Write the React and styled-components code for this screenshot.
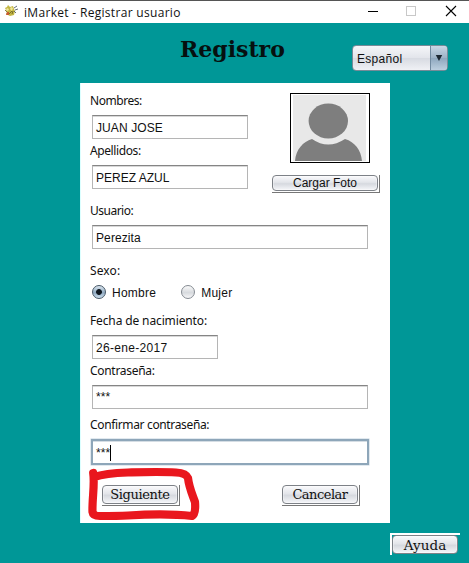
import React from "react";
import styled, { createGlobalStyle, css } from "styled-components";

const Global = createGlobalStyle`
  * { box-sizing: border-box; }
  body { margin: 0; overflow: hidden; background: #009797; }
`;

const Window = styled.main`
  position: relative;
  width: 469px;
  height: 563px;
  display: flex;
  flex-direction: column;
  overflow: hidden;
  background: #009797;
  color: #111;
  font: 12px "Liberation Sans", Arial, sans-serif;
`;

const TitleBar = styled.header`
  height: 23px;
  flex: none;
  display: flex;
  align-items: center;
  padding: 0 12px 2px 4px;
  background: #fff;
  border-top: 1px solid #555;
`;

const WindowTitle = styled.span`
  flex: 1;
  margin-left: 5px;
  padding-top: 3px;
  font: 12px/18px "Open Sans", "Noto Sans", sans-serif;
  letter-spacing: 0.31px;
  white-space: nowrap;
`;

const Heading = styled.div`
  height: 60px;
  flex: none;
  display: flex;
  justify-content: space-between;
  padding: 0 21px 0 180px;
`;

const Title = styled.h1`
  margin: 11px 0 0;
  font: bold 22px/30px "DejaVu Serif", serif;
  letter-spacing: 0;
  color: #061010;
`;

const Combo = styled.div`
  width: 96px;
  height: 26px;
  margin-top: 22px;
  display: flex;
  border: 1px solid #788b98;
  border-radius: 4px;
  overflow: hidden;
  background: linear-gradient(#f5f6f9, #e3e5eb 48%, #d8dbe2 52%, #f0f1f5);
  line-height: 26px;
  padding-left: 4px;
  letter-spacing: 0.3px;
`;

const ComboArrow = styled.span`
  width: 17px;
  margin-left: auto;
  display: grid;
  place-items: center;
  border-left: 1px solid #718aa0;
  background: linear-gradient(#c9d8e6, #9eb3c8 48%, #8fa8bf 52%, #bccfdf);
`;

const Card = styled.form`
  width: 310px;
  height: 440px;
  flex: none;
  margin-left: 80px;
  padding: 10px 20px 0 9px;
  background: #fff;
  border-left: 1px solid #dcffff;
`;

const Top = styled.div`
  display: flex;
  justify-content: space-between;
  height: 110px;
`;

const Names = styled.div`
  width: 160px;
`;

const Label = styled.label`
  display: block;
  height: 22px;
  font: 12px/16px "Noto Sans", sans-serif;
  letter-spacing: ${(p) => p.$spacing ?? -0.25}px;
  white-space: nowrap;
`;

const Field = styled.div`
  width: ${(p) => p.$width}px;
  height: 24px;
  margin: 0 0 ${(p) => p.$gap ?? 0}px 2px;
  padding: 1px 0 ${(p) => (p.$secret ? 1 : 0)}px 3px;
  border: 1px solid #b5b5b5;
  border-top-color: #858585;
  box-shadow: inset 0 1px #d8d8d8;
  display: flex;
  align-items: center;
  line-height: 20px;
  letter-spacing: ${(p) => p.$spacing ?? 0.1}px;
  ${(p) =>
    p.$focused &&
    css`
      height: 26px;
      margin-left: 1px;
      border: 2px solid #8ea6b9;
      box-shadow: 0 0 0 0.5px #c3d3df, inset 0 1px #d5dde4;
    `}
`;

const Caret = styled.i`
  width: 1px;
  height: 16px;
  background: #000;
`;

const PhotoPanel = styled.div`
  width: 108px;
  margin-right: -10px;
  display: flex;
  flex-direction: column;
  align-items: flex-start;
`;

const Photo = styled.div`
  width: 80px;
  height: 70px;
  margin: 0 0 12px 18px;
  border: 1px solid #000;
  svg { display: block; }
`;

const Bevel = styled.div`
  width: ${(p) => p.$width}px;
  height: ${(p) => p.$height}px;
  padding: 0 1px 1px 0;
  border: 0 solid #777;
  border-width: 0 1px 1px 0;
  ${(p) =>
    p.$light &&
    css`
      border: 0 solid #fff;
      border-width: 2px 0 0 2px;
      padding: 0 2px 1px 0;
    `}
`;

const Button = styled.button`
  display: flex;
  align-items: center;
  justify-content: center;
  width: 100%;
  height: 100%;
  padding: 0;
  border: 1px solid #7d8187;
  border-radius: 4px;
  background: linear-gradient(#fafafc, #e3e5ea 45%, #d6d9df 55%, #f5f6f9);
  box-shadow: inset 0 0 0 1px #ffffff55;
  color: #111;
  font: ${(p) => (p.$serif ? `${p.$size}px "DejaVu Serif", serif` : '12px "Liberation Sans", sans-serif')};
  letter-spacing: ${(p) => p.$spacing ?? 0}px;
  line-height: 16px;
  white-space: nowrap;
`;

const Options = styled.div`
  height: 28px;
  display: flex;
  align-items: flex-start;
  padding-left: 2px;
  gap: 25px;
`;

const Option = styled.label`
  display: flex;
  align-items: flex-start;
  gap: 6px;
  height: 15px;
  line-height: 16px;
  letter-spacing: 0.25px;
`;

const Radio = styled.span`
  width: 14px;
  height: 14px;
  border: 1px solid ${(p) => (p.$on ? "#465766" : "#858b92")};
  border-radius: 50%;
  background: ${(p) =>
    p.$on
      ? "radial-gradient(circle at 50% 50%, #101820 0 2.5px, transparent 3.3px), linear-gradient(#dce6ef, #8fa9c0 55%, #cfe1f0)"
      : "linear-gradient(#fafafa, #d7dade 55%, #f6f6f8)"};
`;

const Actions = styled.div`
  display: flex;
  justify-content: space-between;
  padding: 20px 10px 0 12px;
`;

const Footer = styled.footer`
  display: flex;
  justify-content: flex-end;
  padding: 10px 9px 0 0;
`;

const Marker = styled.svg`
  position: absolute;
  left: 80px;
  top: 460px;
  pointer-events: none;
`;

function AppIcon() {
  return (
    <svg width="15" height="14" viewBox="0 0 15 14">
      <path d="M1 4l2-1 1-2 2 2 3-1 1 3 1 2-1 4-4 1-4-2 1-2z" fill="#c3b643" />
      <path d="M2 5l2-1 1 2-2 1M7 3l2 1-1 3-2-2" fill="#f1e79a" />
      <path d="M1 6l3 3M5 10l3-3M8 10l1-3" stroke="#655c23" strokeWidth=".8" />
      <path d="M3 8h2v3H2z" fill="#c85b32" />
      <path d="M10 4l3-2M11 6l3-1M10 7l2 2" stroke="#515b68" strokeWidth=".9" />
    </svg>
  );
}

function WindowControls() {
  return (
    <svg width="90" height="14" viewBox="0 0 90 14">
      <path d="M1 7.5h10" stroke="#000" />
      <rect x="39.5" y="2.5" width="9" height="9" fill="none" stroke="#c8c8c8" />
      <path d="M79 2l10 10M89 2L79 12" stroke="#000" strokeWidth="1.1" />
    </svg>
  );
}

function Avatar() {
  return (
    <svg width="78" height="68" viewBox="0 0 78 68">
      <rect x="2" y="1" width="73" height="66" fill="#e8e8e8" />
      <path d="M4 67C5 55 12 48 21 45Q37 56 54 45C64 48 70 56 71 67Z" fill="#7e7e7e" />
      <ellipse cx="37.3" cy="27" rx="19.7" ry="17.5" fill="#7e7e7e" />
    </svg>
  );
}

export default function App() {
  return (
    <Window>
      <Global />
      <TitleBar>
        <AppIcon />
        <WindowTitle>iMarket - Registrar usuario</WindowTitle>
        <WindowControls />
      </TitleBar>
      <Heading>
        <Title>Registro</Title>
        <Combo>
          Español
          <ComboArrow>
            <svg width="8" height="8" viewBox="0 0 8 8"><path d="M.8 1h6.4L4 7z" fill="#1c2833" /></svg>
          </ComboArrow>
        </Combo>
      </Heading>
      <Card>
        <Top>
          <Names>
            <Label $spacing={-0.45}>Nombres:</Label>
            <Field $width={156} $gap={4}>JUAN JOSE</Field>
            <Label $spacing={-0.4}>Apellidos:</Label>
            <Field $width={156} $spacing={0}>PEREZ AZUL</Field>
          </Names>
          <PhotoPanel>
            <Photo><Avatar /></Photo>
            <Bevel $width={108} $height={18}><Button type="button">Cargar Foto</Button></Bevel>
          </PhotoPanel>
        </Top>
        <Label $spacing={-0.5}>Usuario:</Label>
        <Field $width={276} $gap={14}>Perezita</Field>
        <Label $spacing={0.1}>Sexo:</Label>
        <Options>
          <Option><Radio $on />Hombre</Option>
          <Option><Radio />Mujer</Option>
        </Options>
        <Label $spacing={-0.13}>Fecha de nacimiento:</Label>
        <Field $width={126} $gap={4} $spacing={0.3}>26-ene-2017</Field>
        <Label $spacing={-0.3}>Contraseña:</Label>
        <Field $width={276} $gap={8} $secret>***</Field>
        <Label $spacing={-0.35}>Confirmar contraseña:</Label>
        <Field $width={278} $focused>***<Caret /></Field>
        <Actions>
          <Bevel $width={78} $height={21}><Button type="button" $serif $size={13} $spacing={-0.4}>Siguiente</Button></Bevel>
          <Bevel $width={78} $height={21}><Button type="button" $serif $size={13} $spacing={-0.5}>Cancelar</Button></Bevel>
        </Actions>
      </Card>
      <Footer>
        <Bevel $width={70} $height={22} $light><Button type="button" $serif $size={13.5} $spacing={0.1}>Ayuda</Button></Bevel>
      </Footer>
      <Marker width="124" height="64" viewBox="0 0 124 64">
        <path
          d="M13.2 13C15 24 12 39 12.5 52Q13 56 20 56C28 56 38 56 48 55.5C72 54 94 54 112 56Q116 54 115 42C111 31 109 27 108 18Q106 13 96 12.5C80 11.5 66 12 48 12.5C34 13 23 14 14 17"
          fill="none" stroke="#e9171e" strokeWidth="8.2" strokeLinecap="round" strokeLinejoin="round"
        />
      </Marker>
    </Window>
  );
}
